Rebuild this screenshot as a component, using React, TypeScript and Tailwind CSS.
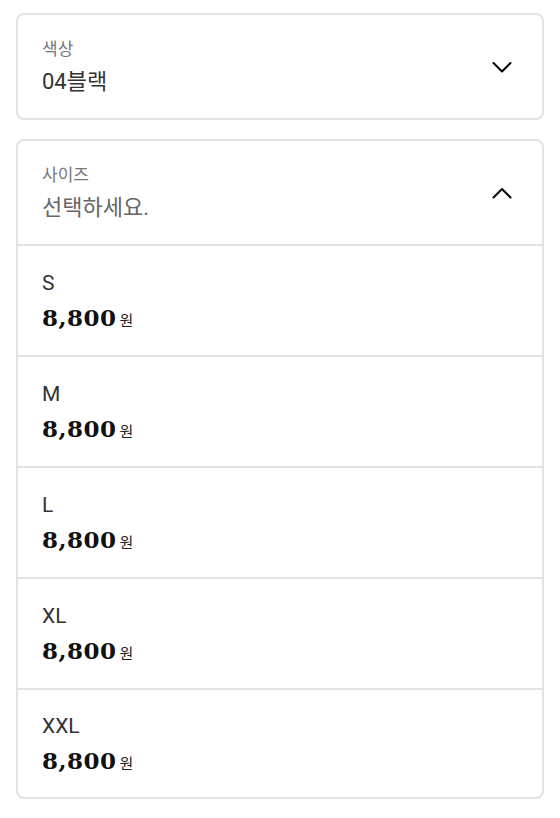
import React from 'react';

const sizes = ['S', 'M', 'L', 'XL', 'XXL'];

function Chevron({ up }: { up?: boolean }) {
  return (
    <svg className="w-6 h-6 text-black" fill="none" stroke="currentColor" viewBox="0 0 24 24">
      <path
        strokeLinecap="round"
        strokeLinejoin="round"
        strokeWidth={2}
        d={up ? 'M3.5 16.5l8.5-8.5 8.5 8.5' : 'M3.5 8l8.5 8.5 8.5-8.5'}
      />
    </svg>
  );
}

export default function App() {
  return (
    <div className="min-h-screen bg-white px-4 pt-[13px] font-['Roboto','Noto_Sans_CJK_KR',sans-serif]">
      {/* Colour select, closed */}
      <div className="h-[107px] rounded-lg border-2 border-[#e2e2e2] flex items-center justify-between pl-[24px] pr-[28px]">
        <div className="flex flex-col">
          <span className="text-[17px] leading-[22px] text-[#777]">색상</span>
          <span className="mt-[8px] text-[22px] leading-[28px] text-[#333]">04블랙</span>
        </div>
        <Chevron />
      </div>

      {/* Size select, open */}
      <div className="mt-[19px] rounded-lg border-2 border-[#e2e2e2] overflow-hidden">
        <div className="h-[105px] flex items-center justify-between pl-[24px] pr-[28px] border-b-2 border-[#e2e2e2]">
          <div className="flex flex-col">
            <span className="text-[17px] leading-[22px] text-[#777]">사이즈</span>
            <span className="mt-[8px] text-[22px] leading-[28px] text-[#666]">선택하세요.</span>
          </div>
          <Chevron up />
        </div>
        {sizes.map((s, i) => (
          <div
            key={s}
            className={`flex flex-col justify-center pl-[24px] ${i < sizes.length - 1 ? 'h-[111px] border-b-2 border-[#e2e2e2]' : 'h-[107px]'}`}
          >
            <span className="text-[21px] leading-[28px] text-[#333]">{s}</span>
            <span className="mt-[7px] flex items-baseline">
              <span className="font-['DejaVu_Serif',serif] font-bold text-[23px] leading-[28px] tracking-[0.5px] text-[#111]">8,800</span>
              <span className="ml-[3px] text-[15px] text-[#222]">원</span>
            </span>
          </div>
        ))}
      </div>
    </div>
  );
}
